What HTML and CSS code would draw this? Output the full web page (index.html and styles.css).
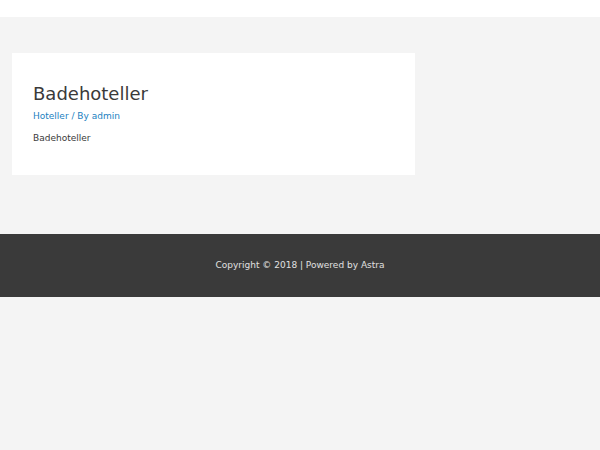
FILE: index.html
```html
<!DOCTYPE html>
<html lang="en">
<head>
  <meta charset="utf-8">
  <title>Badehoteller</title>
  <link rel="stylesheet" href="styles.css">
</head>
<body>
  <header class="site-header"></header>

  <div class="site-content">
    <article class="post">
      <h1 class="entry-title">Badehoteller</h1>
      <div class="entry-meta">
        <a href="#">Hoteller</a> / By <a href="#">admin</a>
      </div>
      <div class="entry-content">
        <p>Badehoteller</p>
      </div>
    </article>
  </div>

  <footer class="site-footer">
    <p>Copyright &copy; 2018 | Powered by <a href="#">Astra</a></p>
  </footer>
</body>
</html>
```

FILE: styles.css
```css
body {
  margin: 0;
  font-family: "DejaVu Sans", sans-serif;
  font-size: 9px;
  line-height: 1.6;
  color: #3a3a3a;
  background-color: #f4f4f4;
}
a {
  color: #1b7fbf;
  text-decoration: none;
}
.site-header {
  height: 17px;
  background-color: #fff;
}
.site-content {
  padding: 36px 185px 59px 12px;
}
.post {
  background-color: #fff;
  padding: 30px 21px;
}
.entry-title {
  margin: 0;
  font-size: 18px;
  font-weight: normal;
  line-height: 1.2;
}
.entry-meta {
  margin-top: 4px;
  color: #1b7fbf;
}
.entry-content p {
  margin: 7.6px 0 0;
}
.site-footer {
  background-color: #3a3a3a;
  color: #e0e0e0;
  height: 63px;
  display: flex;
  align-items: center;
  justify-content: center;
}
.site-footer p {
  margin: 0;
}
.site-footer a {
  color: #e0e0e0;
}
```
